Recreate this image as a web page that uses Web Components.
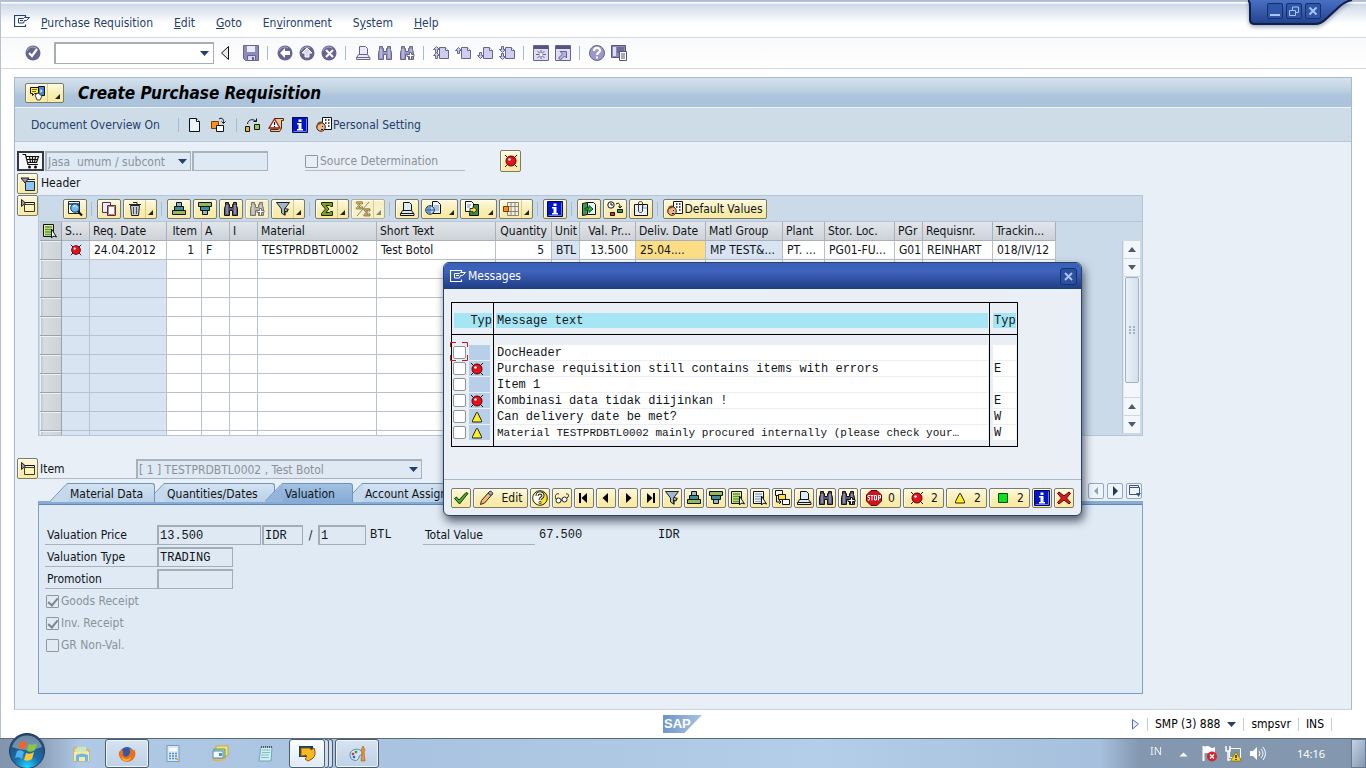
<!DOCTYPE html>
<html lang="en">
<head>
<meta charset="utf-8">
<title>Create Purchase Requisition</title>
<style>
html,body{margin:0;height:100%}
body{font:12px/16px "DejaVu Sans Condensed","DejaVu Sans",sans-serif;color:#101418;background:#fff;overflow:hidden}
</style>
</head>
<body>
<sap-desktop></sap-desktop>
<script>
const define = (name, css, html) => customElements.define(name, class extends HTMLElement {
  constructor() { super(); this.attachShadow({ mode: 'open' }); }
  connectedCallback() {
    const body = typeof html === 'function' ? html(this) : html;
    this.shadowRoot.innerHTML = `<style>*{box-sizing:border-box}button,input,select{font:inherit;color:inherit;margin:0}button{cursor:pointer}${css}</style>${body}`;
  }
});

/* ---------- icons (16 x 16) ---------- */
const P = '#66658f', L = '#cfcdf0';
const printer = (f, s) => `<path d="M4.500 9.500V1.500h6l2 2v6" fill="${f}" stroke="${s}"/><path d="M3.500 9.500h9l2.500 3.500v1.500H1.500V13z" fill="${f}" stroke="${s}"/><path d="M1.500 12.500H15" stroke="${s}"/>`;
const bino = (f, s) => `<path d="M2.500 1.500h3v2h1v3h3v-3h1v-2h3v3l1 3v7h-5v-5h-3v5h-5v-7l1-3z" fill="${f}" stroke="${s}"/><path d="M4 4v9M12 4v9" stroke="#fff" stroke-opacity=".6"/>`;
const plus = (f, s) => `<path d="M10.500 7.500h2v2h2.500v2h-2.500v3h-2v-3H8v-2h2.500z" fill="${f}" stroke="${s}"/>`;
const page = (arrow) => `<path d="M6.500 2.500h6l3 3v8h-9z" fill="${L}" stroke="${P}"/><path d="M12.500 2.500v3h3" stroke="${P}" fill="#fff"/>${arrow}`;
const up = y => `<path d="M3.500 ${y}l3 3h-2v3h-2v-3h-2z" fill="${L}" stroke="${P}"/>`;
const dn = y => `<path d="M3.500 ${y}l3-3h-2v-3h-2v3h-2z" fill="${L}" stroke="${P}"/>`;
const disc = g => `<circle cx="8" cy="8" r="7.500" fill="${P}"/><path d="M2 6a6 6 0 0 1 9-3" stroke="#aeadd0" fill="none"/>${g}`;
const bug = `<path d="M2 2l12 12M14 2L2 14" stroke="#111"/><circle cx="8" cy="8" r="5" fill="#e8101a" stroke="#5c0000"/><circle cx="6.500" cy="6.500" r="1.300" fill="#fff"/>`;
const listPick = (f, c) => `<path d="M1.500 1.500h10v12h-10z" fill="${f}" stroke="#111"/><path d="M3 4h7M3 6.500h7M3 9h7M3 11.500h7" stroke="${c}" stroke-width="1.500"/><path d="M9.500 6v9l2-2 3 1z" fill="#fff" stroke="#111"/>`;
const folder = '<path d="M4.500 6.500h10v7h-10z" fill="#fdf5bd" stroke="#3a3a2a"/><path d="M4 4.500h10.500v2" stroke="#111" fill="none"/>';
const ICONS = {
  window: '<path d="M11.500 4.500v-2h-11v11h11v-2" fill="none" stroke="currentColor" stroke-width="1.200"/><path d="M4.500 5.500h5l1-1h5l-3 3h-2l-1 2.500h-5zM6 7.500h3" fill="none" stroke="currentColor"/>',
  ok: disc('<path d="M4 8l3 3 5-7" fill="none" stroke="#fff" stroke-width="2.200"/>'),
  save: `<path d="M.5.500h15v15h-13l-2-2z" fill="#8d8bbb" stroke="${P}"/><path d="M4 1h8v6H4z" fill="#eceaff"/><path d="M4.500 10.500h8v5h-8z" fill="#d8d6f4" stroke="${P}"/><path d="M9 12h2v3H9z" fill="${P}"/>`,
  back: disc('<path d="M3 8l5-5v3h5v4H8v3z" fill="#fff"/>'),
  exit: disc('<path d="M8 3l5 5h-3v4H6V8H3z" fill="#d8d6f4" stroke="#fff"/>'),
  cancel: disc('<path d="M5 5l7 7M12 5l-7 7" stroke="#fff" stroke-width="2"/>'),
  sprint: printer('#eceaff', P), sfind: bino('#9997c8', P), sfindn: bino('#9997c8', P) + plus('#fff', P),
  first: page(up(1.5) + up(7.5)), prev: page(up(2.5)), next: page(dn(13.5)), last: page(dn(7.5) + dn(14.5)),
  session: `<path d="M.5.500h15v15H.5z" fill="#dddcf2" stroke="${P}"/><path d="M1 1h14v3H1z" fill="#55547c"/><path d="M8 5v9M3 9.500h10M4.500 6l7 7M11.500 6l-7 7" stroke="${P}"/><circle cx="8" cy="9.500" r="1.500" fill="#fff"/>`,
  shortcut: `<path d="M.5.500h15v15H.5z" fill="#dddcf2" stroke="${P}"/><path d="M1 1h14v3H1z" fill="#55547c"/><path d="M5 6.500h6.500V13L9.500 11l-4 4-2-2 4-4z" fill="#b5b3de" stroke="${P}"/>`,
  help: `<circle cx="8" cy="8" r="7.500" fill="#9b99cc" stroke="${P}"/><path d="M5 6c0-4 6-4 6-.5C11 8 8 7.500 8 10" fill="none" stroke="#fff" stroke-width="2.200"/><path d="M7 11.500h2v2H7z" fill="#fff"/>`,
  layout: `<path d="M.5.500h14v12H.5z" fill="#8d8bbb" stroke="#55547c"/><path d="M2 2h3v9H2z" fill="#dddcf2"/><path d="M6 2h7v6H6z" fill="#6e6c9c"/><path d="M8.500 6.500h7v9h-7z" fill="#fff" stroke="#55547c"/><path d="M10 9h4M10 11h4M10 13h4" stroke="#55547c"/>`,
  services: '<path d="M1.500 2.500h8v6h-4l-2 2v-2h-2z" fill="#ffee3a" stroke="#111"/><path d="M3 4.500h5M3 6.500h4" stroke="#7a6b00"/><path d="M9.500 1.500h6v9h-6z" fill="#3e86cf" stroke="#111"/><path d="M11.500 4v4l2-2z" fill="#fff"/><path d="M6 10l3-2 4 3-2 4H8z" fill="#fff" stroke="#444"/>',
  doc: '<path d="M3.500 1.500h7l3 3v10h-10z" fill="#eaf4fb" stroke="#111"/><path d="M10.500 1.500v3h3" fill="#fff" stroke="#111"/>',
  other: '<path d="M1.500 4.500h7v7h-7z" fill="#f5931e" stroke="#7a3c00"/><path d="M6.500 8.500h7v6h-7z" fill="#fff" stroke="#111"/><path d="M9 2c3-2 5 0 4.500 4M11.500 4.500l2 2 2-2" fill="none" stroke="#111"/>',
  hold: '<path d="M1.500 9.500h4v5h-4z" fill="#f5b01e" stroke="#111"/><path d="M10.500 7.500h5v5h-5z" fill="#9acb4a" stroke="#111"/><path d="M3.500 7C4 3 8 1 12.500 4.500M12.500 1.500v3h-3" fill="none" stroke="#111"/>',
  check: '<path d="M6.500 1.500h9v2h-2v8l-2 3h-9v-2h8" fill="#e5c98a" stroke="#4a2a12"/><path d="M6.500 2l5.500 9H1z" fill="#fff" stroke="#a01515" stroke-width="1.300"/><path d="M6.500 5v3M6.500 9v1.300" stroke="#111" stroke-width="1.200"/>',
  info: '<path d="M.500.500h15v15H.500z" fill="#0014c8" stroke="#00085a"/><path d="M1.500 14.500h13v-13" stroke="#6a7cf0" fill="none"/><path d="M6.500 2.500h3v2.500h-3zM5 6h4.500v6H11v1.500H5V12h1.500V7.500H5z" fill="#fff"/>',
  person: '<path d="M6.500.500h9v12h-9z" fill="#fff" stroke="#111"/><path d="M9 3h1.500M12 3h1.500M9 6h1.500M12 6h1.500M12 9h1.500" stroke="#111" stroke-width="1.500"/><circle cx="5" cy="10" r="4.300" fill="#e9b98a" stroke="#3a2010"/><path d="M1 8c0-4 5-4 6-3l-2 2-3 1v3z" fill="#7a4a20"/><path d="M6 9.500h1M5 12.500h2" stroke="#111"/>',
  cart: '<path d="M0 1.500h3l2.500 10h10M3.500 3.500H16l-2 6H5M4.500 6.500h10M7 3.500l1 6M10 3.500v6M13 3.500l-1 6" fill="none" stroke="#111" stroke-width="1.200"/><circle cx="7" cy="14" r="1.500" fill="#111"/><circle cx="13" cy="14" r="1.500" fill="#111"/>',
  open: '<path d="M5.500 5.500h9v9h-9z" fill="#8cc6f5" stroke="#1c2c3c"/><path d="M4 3.500h11" stroke="#1c2c3c"/><path d="M1 2h8L5 7z" fill="#a58bb5" stroke="#222"/>',
  close: folder + '<path d="M1.500 1.500l4 3.500-4 3.500z" fill="#a58bb5" stroke="#222"/>',
  detail: '<path d="M1.500.500h11v12h-11z" fill="#fff" stroke="#222"/><path d="M2 2h10v2H2z" fill="#2a6fbf"/><circle cx="8" cy="7" r="4.300" fill="#69b9f2" stroke="#15304f"/><path d="M6 6l2-1.500 2 2" stroke="#fff" fill="none"/><path d="M11 10.500l4 4" stroke="#111" stroke-width="2.200"/>',
  copy: '<path d="M1.500 1.500h8v10h-8z" fill="#e9eef8" stroke="#55304a"/><path d="M6.500 4.500h8v10h-8z" fill="#fff" stroke="#55304a"/><path d="M7.500 5.500h6v8h-6z" fill="none" stroke="#c57a7a"/>',
  trash: '<path d="M3.500 4.500h9l-1 10h-7z" fill="#c3cad3" stroke="#222"/><path d="M2 3.500h12M6 1.500h4v2" stroke="#222" fill="none"/><path d="M6.500 6v7M9.500 6v7" stroke="#4a5058"/>',
  asc: '<path d="M5.500 1.500h5v4h-5z" fill="#8db9d8" stroke="#111"/><path d="M3.500 5.500h9v4h-9z" fill="#3f8d98" stroke="#111"/><path d="M1.500 9.500h13v4h-13z" fill="#93b95a" stroke="#111"/>',
  desc: '<path d="M1.500 1.500h13v4h-13z" fill="#93b95a" stroke="#111"/><path d="M3.500 5.500h9v4h-9z" fill="#3f8d98" stroke="#111"/><path d="M5.500 9.500h5v4h-5z" fill="#8db9d8" stroke="#111"/>',
  find: bino('#55557c', '#111'), findn: bino('#55557c', '#111') + plus('#fff', '#111'), findoff: bino('#b5b3a8', '#77756a') + plus('#fff', '#77756a'),
  filter: '<path d="M1.500 1.500h13L9.500 8v6l-3-2V8z" fill="#9fb7cf" stroke="#222"/><path d="M10 7.500l3 1-1 2-2 0v4" fill="none" stroke="#222" stroke-width="1.300"/>',
  sum: '<path d="M2.500 1.500h11v4h-2l-1-1H7l3 3.500-3 3.500h3.500l1-1h2v4h-11v-2L6.500 8l-4-4.500z" fill="#7fa01e" stroke="#1f2a05"/>',
  subtotal: '<g transform="scale(.55)"><path d="M2.500 1.500h11v4h-2l-1-1H7l3 3.500-3 3.500h3.500l1-1h2v4h-11v-2L6.500 8l-4-4.500z" fill="#d8c860" stroke="#77714a" stroke-width="1.500"/></g><g transform="translate(7.500 7) scale(.55)"><path d="M2.500 1.500h11v4h-2l-1-1H7l3 3.500-3 3.500h3.500l1-1h2v4h-11v-2L6.500 8l-4-4.500z" fill="#e0a860" stroke="#77714a" stroke-width="1.500"/></g><path d="M14 1L2 15" stroke="#8a8a7a"/>',
  print: printer('#dcebf8', '#111'),
  views: '<path d="M7.500.500h5l3 3v9h-8z" fill="#eaf4fb" stroke="#111"/><path d="M9 5h5M9 7h5M9 9h5" stroke="#6a8fb5"/><circle cx="5" cy="9" r="4.300" fill="#bcd9f3" stroke="#15304f"/><path d="M5 5v8M1 9h8M3 6v6" stroke="#2a5f9f"/>',
  export: '<path d="M8.500 3.500h6v11h-9v-3" fill="#3c8a4a" stroke="#111"/><path d="M1.500.500h6l2 2v8h-8z" fill="#fff" stroke="#111"/><path d="M3 4h4M3 6h3" stroke="#6a8fb5"/><path d="M6 7.500h3V5.500L13 9l-4 3.500v-2H6z" fill="#ffe51e" stroke="#333"/>',
  gridv: '<path d="M4.500 1.500h11v13h-11zM8 1.500v13M12 1.500v13M4.500 5.500h11M4.500 10.500h11" fill="#f4f0e0" stroke="#8a8578"/><path d="M.500 5.500h5v5h-5z" fill="#f0931e" stroke="#7a3c00"/>',
  tbook: '<path d="M1.500 2.500l5-1v12l-5 1z" fill="#3c9a4a" stroke="#111"/><path d="M6.500 1.500h6l2 2v10h-8z" fill="#eaf4fb" stroke="#111"/><path d="M4 7h4V4.500l4 3.500-4 3.500V9H4z" fill="#39b54a" stroke="#0a4a15"/>',
  sched: '<circle cx="4" cy="4" r="3.200" fill="#fff" stroke="#111"/><path d="M4 2v2h2M9 3c3-2 4 0 4 4M11.500 5l1.500 2 2-2" stroke="#111" fill="none"/><path d="M3.500 11.500h4v3h-4z" fill="#e03020" stroke="#111"/><path d="M10.500 8.500h5v3h-5z" fill="#38a030" stroke="#111"/>',
  attach: '<path d="M1.500 3.500h13v11h-13z" fill="#eaf0fa" stroke="#111"/><path d="M10 4v3h4" fill="none" stroke="#8ab"/><path d="M5.500 10V2c0-2 4-2 4 0v8c0 2-4 2-4 0" fill="none" stroke="#333"/>',
  selall: listPick('#dfe8a8', '#5a9a1e'), seloff: listPick('#fff', '#8aaacb'),
  bug,
  tick: '<path d="M1.500 8.500l2-1.500 2.500 3L13 2.500l2 1L6.500 14z" fill="#4fa82a" stroke="#143a08"/>',
  pencil: '<path d="M2.500 10.500l8-9 3 2.500-8 9-4 1.500z" fill="#f5b878" stroke="#3a2410"/><path d="M10.500 1.500c1-1 4 1 3 2.500l-1.500 1.500-3-2.500z" fill="#9aa5c8" stroke="#333"/>',
  qhelp: '<circle cx="8" cy="8" r="7.300" fill="#ffe22a" stroke="#222"/><path d="M8 1.500a6.500 6.500 0 0 0 0 13" fill="#fff"/><path d="M5 6c0-4 6-4 6-.5C11 8 8 7.500 8 10" fill="none" stroke="#111" stroke-width="3"/><path d="M5 6c0-4 6-4 6-.5C11 8 8 7.500 8 10" fill="none" stroke="#fff" stroke-width="1.200"/><path d="M7 11.500h2v2H7z" fill="#fff" stroke="#111" stroke-width=".6"/>',
  glasses: '<circle cx="4.500" cy="10.500" r="2.500" fill="#fff" stroke="#222"/><circle cx="10.500" cy="9.500" r="2.500" fill="#fff" stroke="#222"/><path d="M2 9C0 5 3 3 5 4M7 10h1M13 8c3-2 1-5-1-4" fill="none" stroke="#222"/>',
  pfirst: '<path d="M3 3h2v10H3zM11 3v10L5.500 8z" fill="#000"/>', pprev: '<path d="M10 3v10L4.500 8z" fill="#000"/>',
  pnext: '<path d="M6 3v10l5.500-5z" fill="#000"/>', plast: '<path d="M11 3h2v10h-2zM5 3v10l5.500-5z" fill="#000"/>',
  tree: '<path d="M1.500.500h7v5h-7z" fill="#fff" stroke="#111"/><path d="M4.500 4.500h7v5h-7z" fill="#ffe22a" stroke="#111"/><path d="M8.500 9.500h7v5h-7z" fill="#fff" stroke="#111"/><path d="M2.500 6v6h4M5 10l2 2-2 2" fill="none" stroke="#111"/>',
  stop: '<path d="M5 .500h6L15.500 5v6L11 15.500H5L.500 11V5z" fill="#cf1420" stroke="#5c0000"/><path d="M4 5.500H2V7.500h1.500V10H1.500M4.500 5.500h3M6 5.500V10.500M8.500 5.500h2v4.500h-2zM12.500 10.500V5.500h2V8h-2" fill="none" stroke="#fff"/>',
  warn: '<path d="M7.500 3.500h1l4 8v1.500H3.500v-1.500z" fill="#ffee1e" stroke="#222"/>',
  green: '<path d="M3.500 3.500h9v9h-9z" fill="#0ee01e" stroke="#064a0a"/>',
  xred: '<path d="M3 2l5 4 5-4 1.500 1.500L10.500 8l4 4.500L13 14l-5-4-5 4-1.500-1.500L5.500 8l-4-4.500z" fill="#d81e1e" stroke="#5c0000"/>',
  left: '<path d="M10 4v8L6 8z" fill="#8aa2bb"/>', right: '<path d="M6 3v10l5-5z" fill="#23395c"/>',
  list: '<path d="M3.500 4.500v-2h9v2M3.500 4.500h10v7h-10z" fill="none" stroke="#3c5674"/><path d="M10 10h5l-2.500 4z" fill="#3c5674"/>'
};
define('sap-icon', ':host{display:block;width:16px;height:16px;flex:none}svg{display:block;width:100%;height:100%}',
  el => `<svg viewBox="0 0 16 16" fill="none" aria-hidden="true">${ICONS[el.getAttribute('name')] || ''}</svg>`);

/* flat toolbar item */
define('tool-item', ':host{display:block}button{display:flex;align-items:center;gap:1px;border:0;background:none;padding:0;height:20px;white-space:nowrap}',
  el => `<button aria-label="${el.getAttribute('label') || ''}"><sap-icon name="${el.getAttribute('icon')}"></sap-icon><slot></slot></button>`);
define('tool-sep', ':host{display:block;width:6px;height:14px;flex:none}i{display:block;width:1px;height:100%;margin-left:2px;background:#a9bccd}', '<i></i>');

/* raised yellow button; "menu" adds the drop-down corner */
define('push-button', `:host{display:block;flex:none;width:var(--w,24px);height:20px}
button{display:flex;align-items:center;justify-content:center;gap:var(--gap,0px);width:100%;height:100%;padding:0 2px;border:1px solid #7d7a68;border-radius:2px;background:linear-gradient(#fdf9df,#f8edb0 60%,#fbeaa0);box-shadow:inset 1px 1px #fffdf0;white-space:nowrap}
button.m{justify-content:flex-start;padding-left:3px}
.a{flex:1;align-self:stretch;margin-left:2px;display:flex;align-items:flex-end;justify-content:flex-end;padding:0 1px 3px 0}
.d .a{border-left:1px solid #d8cc90}
:host([off]) button{border-color:#b3ae94;background:#f6efc8}`,
  el => `<button class="${el.hasAttribute('menu') ? 'm ' : ''}${el.getAttribute('menu') === 'split' ? 'd' : ''}" aria-label="${el.getAttribute('label') || ''}"><sap-icon name="${el.getAttribute('icon')}"></sap-icon><slot></slot>${el.hasAttribute('menu') ? `<span class="a"><svg width="5" height="5"><path d="M5 0v5H0z" fill="${el.hasAttribute('off') ? '#8a8670' : '#222'}"/></svg></span>` : ''}</button>`);

define('menu-bar', `:host{display:flex;align-items:center;height:34px;padding:5px 13px 0;color:#24406c;border-bottom:1px solid #d5d9e0;background:linear-gradient(#cfd9e8,#fff 60%)}
nav{display:flex;gap:21px;margin-left:11px}button{border:0;padding:0;background:none}sap-icon{color:#24406c;margin-bottom:4px}`,
  `<sap-icon name="window"></sap-icon><nav>
  <button><u>P</u>urchase Requisition</button><button><u>E</u>dit</button><button><u>G</u>oto</button><button>En<u>v</u>ironment</button><button>S<u>y</u>stem</button><button><u>H</u>elp</button></nav>`);

define('system-bar', `:host{display:flex;align-items:center;gap:6px;height:31px;padding:0 24px;border-bottom:1px solid #d5d9e0;background:linear-gradient(#f8f9fb,#fff)}
.cmd{display:flex;align-items:center;width:160px;height:22px;margin:0 0 0 7px;border:2px solid #a9adb0;border-right-width:1px;border-bottom-width:1px;background:#fff}
.cmd input{border:0;padding:0 3px;min-width:0;flex:1;height:16px;outline:0;background:none}.cmd button,.tri{border:0;background:none;padding:0;width:18px;height:16px}
.tri{width:10px;margin-right:7px}svg{display:block;margin:auto}`,
  `<tool-item icon="ok" label="Enter"></tool-item>
  <div class="cmd"><input aria-label="Command"><button aria-label="History"><svg width="9" height="5"><path d="M0 0h9L4.500 5z" fill="#24406c"/></svg></button></div>
  <button class="tri" aria-label="Collapse"><svg width="10" height="16"><path d="M8.500 1.500v13L1.500 8z" fill="#e8e8e8" stroke="#111"/></svg></button>
  <tool-item icon="save" label="Save"></tool-item><tool-sep></tool-sep>
  <tool-item icon="back" label="Back"></tool-item><tool-item icon="exit" label="Exit"></tool-item><tool-item icon="cancel" label="Cancel"></tool-item><tool-sep></tool-sep>
  <tool-item icon="sprint" label="Print"></tool-item><tool-item icon="sfind" label="Find"></tool-item><tool-item icon="sfindn" label="Find next"></tool-item><tool-sep></tool-sep>
  <tool-item icon="first" label="First page"></tool-item><tool-item icon="prev" label="Previous page"></tool-item><tool-item icon="next" label="Next page"></tool-item><tool-item icon="last" label="Last page"></tool-item><tool-sep></tool-sep>
  <tool-item icon="session" label="New session"></tool-item><tool-item icon="shortcut" label="Shortcut"></tool-item><tool-sep></tool-sep>
  <tool-item icon="help" label="Help"></tool-item><tool-item icon="layout" label="Layout"></tool-item>`);

define('title-bar', `:host{display:flex;align-items:center;height:30px;padding:0 10px;background:linear-gradient(#d5e2ee,#bdd0df 45%,#adc4dd 60%,#abc2dc);border-bottom:1px solid #eef4fa}
h1{margin:0 0 0 14px;font-size:17px;line-height:20px;font-style:italic;font-weight:bold;color:#000}
push-button{--w:39px}`,
  `<push-button icon="services" menu="split" label="Services"></push-button><h1><slot></slot></h1>`);

define('app-bar', `:host{display:flex;align-items:center;height:34px;padding:0 16px;color:#24406c;background:#cedce8;border-bottom:1px solid #b6c8da}
.t{border:0;padding:0;background:none}tool-item,tool-sep{margin-left:8px}tool-sep+tool-item{margin-left:4px}tool-sep.s{margin-left:16px}`,
  `<button class="t">Document Overview On</button><tool-sep class="s"></tool-sep><tool-item icon="doc" label="New"></tool-item><tool-item icon="other" label="Other requisition"></tool-item><tool-sep></tool-sep>
  <tool-item icon="hold" label="Hold"></tool-item><tool-item icon="check" label="Check"></tool-item><tool-item icon="info" label="Info"></tool-item><tool-item icon="person">Personal Setting</tool-item>`);

/* disabled drop-down */
define('drop-field', `:host{display:grid;flex:none;width:var(--w);height:20px;color:#8a9299;font-family:inherit}
select{grid-area:1/1;appearance:none;width:100%;height:20px;padding:0 20px 0 1px;border:2px solid #a9b2ba;border-right-width:1px;border-bottom-width:1px;border-radius:0;background:#dfe9f3;opacity:1;color:inherit}
svg{grid-area:1/1;align-self:center;justify-self:end;margin-right:4px;pointer-events:none}`,
  el => `<select disabled aria-label="${el.getAttribute('label')}"><option>${el.getAttribute('value')}</option></select><svg width="9" height="5"><path d="M0 0h9L4.500 5z" fill="#24406c"/></svg>`);

define('tick-field', `:host{display:flex}label{display:flex;align-items:center;gap:2px;flex:1;height:20px;color:#8a9299}
input{appearance:none;width:13px;height:13px;border:1px solid #8f989f;border-radius:1px;background:transparent;display:grid}
input:checked::after{content:"";width:4px;height:8px;margin:0 0 0 3px;border:solid #7d868e;border-width:0 2px 2px 0;transform:rotate(40deg)}`,
  el => `<label><input type="checkbox" disabled ${el.hasAttribute('checked') ? 'checked' : ''}><slot></slot></label>`);

define('scroll-bar', `:host{display:flex;flex-direction:column;width:18px;border-left:1px solid #b3c5d8;background:#dce7f1;padding:0 0 0 1px}
button{border:0;border-bottom:1px solid #c9d6e3;padding:0;height:18px;background:#f4f7fa;display:grid;place-items:center;flex:none}
.track{flex:1;background:#f4f7fa;padding-bottom:14px;border-bottom:1px solid #c9d6e3}
.thumb{height:100%;margin:0 1px;border:1px solid #9fb2c6;border-radius:2px;background:linear-gradient(90deg,#e9f0f7,#d3e0ed);display:grid;place-items:center}`,
  (() => { const b = (d, n) => `<button aria-label="${n}"><svg width="8" height="5"><path d="${d}" fill="#4c5c6c"/></svg></button>`; const U = 'M0 5h8L4 0z', D = 'M0 0h8L4 5z';
    return b(U, 'Top') + b(D, 'Down') + '<div class="track"><div class="thumb"><svg width="7" height="9"><path d="M0 1h2M4 1h2M0 4h2M4 4h2M0 7h2M4 7h2" stroke="#9fb2c6" stroke-width="2"/></svg></div></div>' + b(U, 'Up') + b(D, 'Bottom'); })());

define('item-grid', `:host{display:block;flex:1;min-width:0;border:1px solid #b3c5d8;background:#cbdae8}
.bar{display:flex;align-items:center;gap:2px;height:26px;padding-left:24px;border-bottom:1px solid #b3c5d8}
.view{display:flex;height:213px;padding:0 2px 0 1px;overflow:hidden}
.tb{flex:1;min-width:0;overflow:hidden}
table{border-collapse:separate;border-spacing:0;table-layout:fixed;width:1016px}
th,td{height:19px;line-height:16px;padding:0 3px;font-weight:normal;text-align:left;white-space:nowrap;overflow:hidden;text-overflow:clip;border-right:1px solid #b9c2cc;border-bottom:1px solid #b9c2cc}
th{background:linear-gradient(#e2e6ea,#cdd2d8);border-color:#a9b0b8}
td{background:#fff;padding:0 4px 1px}
tr>:first-child{padding:0 2px;background:#c6ccd3;border-color:#9aa4ae}
tr td:first-child{background:linear-gradient(90deg,#b8bec6,#d9dde2 20%,#cdd2d8);box-shadow:inset 1px 1px #eef1f4}
.k{background:#d9e4f2}th.r{text-align:right;padding-right:4px}td.r{text-align:right;padding-right:7px}.y{background:#fbdd86}.c sap-icon{margin:auto;width:14px;height:14px}
scroll-bar{margin-top:19px;height:193px}`,
  () => {
    const w = [22, 28, 77, 35, 28, 28, 119, 119, 56, 28, 56, 70, 77, 42, 70, 28, 70, 63];
    const h = ['', 'S...', 'Req. Date', 'Item', 'A', 'I', 'Material', 'Short Text', 'Quantity', 'Unit', 'Val. Pr...', 'Deliv. Date', 'Matl Group', 'Plant', 'Stor. Loc.', 'PGr', 'Requisnr.', 'Trackin...'];
    const d = ['', '<sap-icon name="bug"></sap-icon>', '24.04.2012', '1', 'F', '', 'TESTPRDBTL0002', 'Test Botol', '5', 'BTL', '13.500', '25.04....', 'MP TEST&amp;...', 'PT. ...', 'PG01-FU...', 'G01', 'REINHART', '018/IV/12'];
    const cls = (i, row) => i === 1 ? 'k c' : [9, 12].includes(i) || (i === 2 && row) ? 'k' : [3, 8, 10].includes(i) ? 'r' : i === 11 && !row ? 'y' : '';
    const b = (i, l, x = '') => `<push-button icon="${i}" label="${l}" ${x}></push-button>`, s = '<tool-sep></tool-sep>';
    const W = n => `style="--w:${n}px"`;
    return `<div class="bar">${b('detail', 'Details')}${s}${b('copy', 'Copy')}${b('trash', 'Delete', 'menu="split" ' + W(34))}${s}${b('asc', 'Sort ascending')}${b('desc', 'Sort descending')}${b('find', 'Find')}${b('findoff', 'Find next', 'off')}${b('filter', 'Filter', 'menu="split" ' + W(34))}${s}${b('sum', 'Total', 'menu="split" ' + W(34))}${b('subtotal', 'Subtotals', 'off menu="split" ' + W(34))}${s}${b('print', 'Print')}${b('views', 'Views', 'menu ' + W(37))}${b('export', 'Export', 'menu ' + W(37))}${b('gridv', 'Layout', 'menu="split" ' + W(34))}${s}${b('info', 'Info')}${s}${b('tbook', 'Account assignment')}${b('sched', 'Schedule')}${b('attach', 'Attachments')}${s}<push-button icon="person" style="--w:104px;--gap:1px">Default Values</push-button></div>
    <div class="view"><div class="tb"><table><colgroup>${w.map(x => `<col style="width:${x}px">`).join('')}</colgroup>
    <thead><tr>${h.map((t, i) => `<th class="${[3, 8, 10].includes(i) ? 'r' : ''}">${i ? t : '<sap-icon name="selall"></sap-icon>'}</th>`).join('')}</tr></thead>
    <tbody><tr>${d.map((t, i) => `<td class="${cls(i, 0)}">${t}</td>`).join('')}</tr>${Array.from({ length: 10 }, () => `<tr>${d.map((t, i) => `<td class="${i === 9 || i === 12 ? '' : cls(i, 1)}"></td>`).join('')}</tr>`).join('')}</tbody></table></div><scroll-bar></scroll-bar></div>`;
  });

define('tab-item', `:host{display:block;margin-left:-8px;position:relative}
button{display:flex;border:0;padding:0;background:none;height:19px}
.b{display:block;height:19px;line-height:20px;padding:0 var(--pr,11px) 0 2px;border-top:1px solid #6d94bd;border-right:1px solid #6d94bd;border-radius:0 3px 0 0;background:linear-gradient(#d3e3f2,#b9d0e7);white-space:nowrap}
:host([active]){z-index:2;margin-left:-10px}:host([active]) .b{background:linear-gradient(#a3c1e2,#84aad6)}
:host([first]){z-index:1;margin-left:12px}`,
  el => `<button role="tab"><svg width="18" height="19"><path d="M0 19L18 .500V19z" fill="${el.hasAttribute('active') ? '#93b5dc' : '#c6d9ec'}"/><path d="M0 18.500L16 1.500q1-1 2-1" fill="none" stroke="#6d94bd"/></svg><span class="b"><slot></slot></span></button>`);

define('item-detail', `:host{display:block}
.strip{display:flex;align-items:flex-start;height:18px}
.nav{display:flex;gap:3px;margin-left:auto;padding-right:1px}.nav button{width:16px;height:16px;padding:0;border:1px solid #8ea9c6;border-radius:2px;background:#eff4f9}.nav sap-icon{margin:-1px}
.pane{min-height:193px;padding:21px 6px 0;border:1px solid #7da0c4;border-top:3px solid #86abd4;box-shadow:inset 0 1px #5f88b4;background:#dfeaf4}
.row{display:flex;align-items:center;height:20px;margin-bottom:2px}
label,.l{width:112px;height:20px;line-height:21px;padding-left:2px;border-bottom:1px solid #a9b2ba;flex:none}
input{height:20px;padding:0 1px;border:2px solid #a3adb5;border-right-width:1px;border-bottom-width:1px;background:#dfe9f3;border-radius:0}
input,.m{font-family:"Liberation Mono",monospace}
.p{width:104px}.q{width:41px;margin-left:1px}.s{width:15px;text-align:center}.u{width:48px}.v{width:76px}.m{width:57px;padding-left:4px}.w{width:119px}
tick-field{margin:0 0 2px 1px}`,
  `<div class="strip"><tab-item first>Material Data</tab-item><tab-item style="--pr:16px">Quantities/Dates</tab-item><tab-item active style="--pr:17px">Valuation</tab-item><tab-item>Account Assignment</tab-item>
  <div class="nav"><button aria-label="Previous tab"><sap-icon name="left"></sap-icon></button><button aria-label="Next tab"><sap-icon name="right"></sap-icon></button><button aria-label="Tab list"><sap-icon name="list"></sap-icon></button></div></div>
  <div class="pane">
  <div class="row"><label for="vp">Valuation Price</label><input id="vp" class="p" value="13.500" readonly><input class="q" value="IDR" readonly aria-label="Currency"><span class="s">/</span><input class="u" value="1" readonly aria-label="Per"><span class="m">BTL</span><span class="l">Total Value</span><span class="m w">67.500</span><span class="m">IDR</span></div>
  <div class="row"><label for="vt">Valuation Type</label><input id="vt" class="v" value="TRADING" readonly></div>
  <div class="row"><label for="pr">Promotion</label><input id="pr" class="v" readonly></div>
  <tick-field checked>Goods Receipt</tick-field><tick-field checked>Inv. Receipt</tick-field><tick-field>GR Non-Val.</tick-field></div>`);

define('requisition-form', `:host{display:block;flex:1;padding:8px 208px 14px 2px;background:#e9eff6}
.row{display:flex}.head{height:22px;align-items:center;margin-bottom:1px}
.cart{width:27px;height:20px;border:2px solid #333a44;background:#f4f6f8;padding:0 2px;margin-right:1px}
.in{width:76px;height:20px;border:2px solid #a9b2ba;border-right-width:1px;border-bottom-width:1px;background:#dfe9f3;margin-left:1px}
.src{width:160px;margin:0 35px 0 37px;border-bottom:1px solid #b3bac2;height:20px}
.sq{--w:21px;height:21px}.head .sq{height:22px}.lab{line-height:21px;padding-left:3px}
.two{height:21px;margin-bottom:1px}.item{height:21px;margin:22px 0 4px}.item .lab{width:98px;padding-left:2px;height:21px;line-height:23px;border-bottom:1px solid #b3bac2}
.item drop-field{margin-top:1px}`,
  `<div class="row head"><sap-icon class="cart" name="cart"></sap-icon><drop-field label="Document type" value="Jasa&nbsp; umum / subcont" style="--w:146px"></drop-field><input class="in" disabled aria-label="Number"><tick-field class="src">Source Determination</tick-field><push-button class="sq" icon="bug" label="Messages"></push-button></div>
  <div class="row two"><push-button class="sq" icon="open" label="Expand header"></push-button><span class="lab">Header</span></div>
  <div class="row"><push-button class="sq" icon="close" label="Collapse items"></push-button><item-grid></item-grid></div>
  <div class="row item"><push-button class="sq" icon="close" label="Collapse item"></push-button><span class="lab">Item</span><drop-field label="Item" value="[ 1 ] TESTPRDBTL0002 , Test Botol" style="--w:286px"></drop-field></div>
  <item-detail style="margin-left:21px"></item-detail>`);

define('message-dialog', `:host{display:block;position:absolute;left:443px;top:262px;width:639px;z-index:5}
section{border:1px solid #2a4468;border-radius:6px;background:#e9eff5;box-shadow:2px 5px 10px rgba(30,40,60,.75);overflow:hidden}
header{display:flex;align-items:center;height:26px;padding:0 4px 0 6px;color:#fff;background:linear-gradient(#3a5fb8,#3f64bd 30%,#1f3c84)}
h2{flex:1;margin:0 0 0 2px;font-size:12px;font-weight:normal}
header button{width:17px;height:17px;padding:0;border:1px solid #16306e;border-radius:3px;background:#2c4f9f;display:grid;place-items:center}
.body{padding:13px 7px 0;height:190px}
table{border-collapse:separate;border-spacing:0;table-layout:fixed;width:567px;font-family:"Liberation Mono",monospace;border:1px solid #000}
th,td{padding:0;font-weight:normal;text-align:left;line-height:16px;white-space:nowrap}
th{height:32px;padding-top:10px;vertical-align:top;border-bottom:1px solid #000}th div{background:#a6e6f4;height:15px;margin:0 1px 0 2px;padding-left:1px}
.n div{text-align:right;padding-right:0}
.t,.e{border-left:1px solid #000}
td{height:16px;vertical-align:top}td div{background:#fff;height:15px;margin:0 1px 0 2px;padding-left:1px}
.i div{background:#b8cfe9;margin:0 3px 0 0;padding:0}
.e div{margin:0 1px 0 3px;padding-left:1px}
.long{font-size:11px}
.f td{height:10px}.z td{height:5px}
input{appearance:none;display:block;width:13px;height:13px;margin:1px 1px 0;border:1px solid #8d949b;border-radius:2px;background:#fff}
.foc{position:relative}.foc svg{position:absolute;left:-2px;top:-3px}
footer{display:flex;gap:2px;height:36px;padding:8px 7px 0;border-top:1px solid #a9b9c9}
push-button{--w:20px}.n2{--w:41px;--gap:6px}`,
  () => {
    const rows = [['', 'DocHeader', ''], ['bug', 'Purchase requisition still contains items with errors', 'E'], ['', 'Item 1', ''], ['bug', 'Kombinasi data tidak diijinkan !', 'E'], ['warn', 'Can delivery date be met?', 'W'], ['warn', 'Material TESTPRDBTL0002 mainly procured internally (please check your…', 'W']];
    const b = (i, l) => `<push-button icon="${i}" label="${l}"></push-button>`;
    return `<section role="dialog" aria-label="Messages"><header><sap-icon name="window"></sap-icon><h2>Messages</h2><button aria-label="Close"><svg width="9" height="9"><path d="M1 1l7 7M8 1L1 8" stroke="#a9c4f5" stroke-width="2"/></svg></button></header>
    <div class="body"><table><colgroup><col style="width:17px"><col style="width:24px"><col style="width:496px"><col style="width:28px"></colgroup><thead><tr><th colspan="2" class="n"><div>Typ</div></th><th class="t"><div>Message text</div></th><th class="e"><div>Typ</div></th></tr></thead>
    <tbody><tr class="f"><td colspan="2"></td><td class="t"></td><td class="e"></td></tr>${rows.map((r, n) => `<tr><td class="${n ? '' : 'foc'}"><input type="checkbox" aria-label="${r[1]}">${n ? '' : '<svg width="18" height="19"><path d="M.5 5V.500H6M12 .500h5.500V5M17.500 13v5.500H12M6 18.500H.5V13" fill="none" stroke="#c01818"/></svg>'}</td><td class="i"><div>${r[0] ? `<sap-icon name="${r[0]}"></sap-icon>` : ''}</div></td><td class="t"><div${r[1].length > 60 ? ' class="long"' : ''}>${r[1]}</div></td><td class="e"><div>${r[2]}</div></td></tr>`).join('')}<tr class="z"><td colspan="2"></td><td class="t"></td><td class="e"></td></tr></tbody></table></div>
    <footer>${b('tick', 'Continue')}<push-button icon="pencil" style="--w:55px;--gap:7px">Edit</push-button>${b('qhelp', 'Help')}${b('glasses', 'Display')}${b('pfirst', 'First')}${b('pprev', 'Previous')}${b('pnext', 'Next')}${b('plast', 'Last')}${b('filter', 'Filter')}${b('asc', 'Sort ascending')}${b('desc', 'Sort descending')}${b('selall', 'Select all')}${b('seloff', 'Deselect all')}${b('tree', 'Layout')}${b('print', 'Print')}${b('find', 'Find')}${b('findn', 'Find next')}<push-button class="n2" icon="stop">0</push-button><push-button class="n2" icon="bug">2</push-button><push-button class="n2" icon="warn">2</push-button><push-button class="n2" icon="green">2</push-button>${b('info', 'Info')}${b('xred', 'Cancel')}</footer></section>`;
  });

define('window-controls', `:host{display:block;position:absolute;right:0;top:0;width:118px;height:30px}
svg{display:block}.bg{filter:drop-shadow(0 2px 2px rgba(20,40,80,.4))}
div{position:absolute;left:19px;top:3px;display:flex;gap:3px}
button{width:16px;height:16px;padding:0;border:1px solid #16306e;border-radius:2px;background:#2f55a8;display:grid;place-items:center}`,
  `<svg class="bg" width="118" height="30"><defs><linearGradient id="g" x2="0" y2="1"><stop stop-color="#4a70c4"/><stop offset="1" stop-color="#22418c"/></linearGradient></defs><path d="M0 0q2 2 2 6v14q0 4 5 4h60q6 0 11-5L92 6q6-5 12-6z" fill="url(#g)"/><path d="M0 0q2 2 2 6v14q0 4 5 4h60q6 0 11-5L92 6q6-5 12-6" fill="none" stroke="#0d1d4c" stroke-width="2"/></svg>
  <div><button aria-label="Minimize"><svg width="10" height="10"><path d="M0 9h10" stroke="#a9c4f5" stroke-width="2"/></svg></button><button aria-label="Restore"><svg width="10" height="10"><path d="M.5 4.500h6v5h-6zM3.500 4V1h6v5.500H7" fill="none" stroke="#a9c4f5"/></svg></button><button aria-label="Close"><svg width="10" height="10"><path d="M1.500 1.500l7 7M8.500 1.500l-7 7" stroke="#a9c4f5" stroke-width="2"/></svg></button></div>`);

define('status-bar', `:host{display:grid;grid-template-columns:1fr auto 1fr;align-items:center;height:28px;padding:0 34px 0 32px;background:#fff;color:#000}
.r{display:flex;align-items:center;justify-content:flex-end;gap:7px}.r i{width:1px;height:13px;background:#c5ccd4}svg{display:block}
.logo{position:relative;width:39px;height:18px;padding-left:1px;font:bold 13px/18px "Liberation Sans",sans-serif;color:#fff}
.logo::before{content:"";position:absolute;inset:0;z-index:-1;background:linear-gradient(100deg,#6c93c8,#a9c6e6);clip-path:polygon(0 0,100% 0,55% 100%,0 100%)}
.logo{z-index:0}`,
  `<span></span><span class="logo">SAP</span><div class="r"><svg width="9" height="12"><path d="M1.500 1.500v9.500l6-5z" fill="#e3eefa" stroke="#5575a5"/></svg><i></i><span>SMP (3) 888</span><svg width="9" height="5"><path d="M0 0h9L4.500 5z" fill="#24406c"/></svg><i></i><span>smpsvr</span><i></i><span>INS</span><i></i></div>`);

define('task-bar', `:host{display:flex;align-items:center;flex:none;height:30px;padding-left:8px;border-top:1px solid #5c6a7a;color:#fff;font:11px/16px "Noto Sans",sans-serif;background:linear-gradient(90deg,#8294ab,#8c9fb6 40px,#b0c9e5 80px,#a9c3e0 30%,#b4cde8 60%,#a6c0dd 1100px,#8397af 1140px,#8397af)}
button{border:0;padding:0;background:none;height:29px;display:grid;place-items:center;width:44px}
.on{border:1px solid #4b5b70;border-radius:3px;background:linear-gradient(#d6e3f1,#bed1e7);box-shadow:inset 0 0 0 1px #eff6fc}
.hot{background:linear-gradient(#fdfeff,#dfe9f5);width:36px}.orb{width:38px;height:36px;margin-top:-6px}
svg{display:block}.tray{display:flex;align-items:center;margin-left:auto;height:29px}
.sd{width:15px;border:1px solid #66788f;border-radius:0;background:linear-gradient(120deg,#c5d3e2,#8397af)}
.st{width:4px;height:29px;border:1px solid #4b5b70;border-left:0;border-radius:0 3px 3px 0;background:#cfdcea}`,
  `<button class="orb" aria-label="Start"><svg width="38" height="36" viewBox="0 0 38 36"><defs><radialGradient id="o" cx=".5" cy=".95" r=".9"><stop stop-color="#22d5ff"/><stop offset=".4" stop-color="#1a6fae"/><stop offset="1" stop-color="#24486e"/></radialGradient></defs><circle cx="19" cy="18" r="17.500" fill="url(#o)" stroke="#1c3a5c"/><path d="M4 14a15.500 15.500 0 0 1 30 0q-15 6-30 0" fill="#fff" opacity=".35"/><path d="M12 9q4-2 7 1l-2 7q-3-3-7-1z" fill="#f0662a"/><path d="M21 11q4 2 8-1l-2 7q-4 3-8 1z" fill="#8cc63f"/><path d="M9 18q4-2 7 1l-2 7q-3-3-7-1z" fill="#4fb1ee"/><path d="M18 20q4 2 8-1l-2 7q-4 3-8 1z" fill="#fdc82f"/></svg></button>
  <button style="width:59px;padding-left:12px" aria-label="Explorer"><svg width="18" height="16"><path d="M1 2h6l1 2h8v11H1z" fill="#f2dc8c" stroke="#c5a850"/><path d="M4 1h9v5H4z" fill="#cfe8b8"/><path d="M1 6h15v9H1z" fill="#f8e9a5"/><path d="M3 15V9q6-3 12 0v6h-3v-4H6v4z" fill="#6db8e6"/></svg></button>
  <button class="on" aria-label="Firefox"><svg width="18" height="18"><circle cx="9" cy="9" r="7" fill="#2f58a8"/><path d="M11 3a6 6 0 0 1-1 8q-3 2-5-1 1-2-1-6L1 7a8.300 8.300 0 1 0 15-3q0 2-1 2-1-2-4-3z" fill="#e8701c"/><path d="M3 11q4 6 10 1-1 5-6 4-3-1-4-5z" fill="#f8b52c"/></svg></button>
  <button style="width:48px" aria-label="Calculator"><svg width="14" height="17"><path d="M1 .500h12v16H1z" fill="#d8e9f8" stroke="#6f9cc8"/><path d="M3 3h8v3H3z" fill="#fff"/><path d="M3 8.500h8M3 11h8M3 13.500h8" stroke="#5a8cc0" stroke-width="1.500" stroke-dasharray="2 1"/><path d="M10 13h2v2h-2z" fill="#f0a030"/></svg></button>
  <button style="width:46px" aria-label="Sticky notes"><svg width="18" height="17"><path d="M5 1h12v10H5z" fill="#f8e27a" stroke="#c5a850"/><path d="M3 4h11v9H3z" fill="#a9dba0" stroke="#5a9c60"/><path d="M2 6h10v7H2z" fill="#f2f8fd" stroke="#5a8cc0"/><path d="M8 8h3v3H8z" fill="#4a90d0"/><path d="M1 13q6 4 14-1v2q-8 4-14 1z" fill="#f0b040"/></svg></button>
  <button style="width:46px" aria-label="Notepad"><svg width="16" height="17"><path d="M3 2h11l-1 14H1z" fill="#d3eff3" stroke="#6aa9b5"/><path d="M4 5h8M4 7.500h8M3 10h8M3 12.500h8" stroke="#7fbcc8"/><path d="M3 2h11" stroke="#556" stroke-width="2" stroke-dasharray="1 1"/></svg></button>
  <button class="on hot" aria-label="SAP Logon"><svg width="18" height="18"><path d="M1 1h14v11H1z" fill="#173c6c"/><path d="M3 3h9l1 2 3-2q3 7-2 11l-4 2-3-2q3-2 1-4-2 1-5 1z" fill="#f8b820" stroke="#8a5a08"/></svg></button><i class="st"></i><i class="st"></i>
  <button class="on" style="margin-left:2px" aria-label="Paint"><svg width="18" height="17"><path d="M2 10C2 5 8 3 12 5q4 3 1 5-3 1-2 3-2 4-6 2-3-1-3-5z" fill="#cfe3f2" stroke="#5a8cb0"/><circle cx="5" cy="9" r="1.300" fill="#d03030"/><circle cx="8" cy="7" r="1.300" fill="#3a9a3a"/><circle cx="6" cy="12" r="1.300" fill="#3060c0"/><path d="M13 16l1-9-1-2 2-4 2 4-1 2 1 9z" fill="#e8953a" stroke="#a05a18" stroke-width=".6"/></svg></button>
  <div class="tray"><span style="margin-right:17px;margin-bottom:6px;opacity:.85">IN</span><svg width="9" height="5" style="margin-right:13px;margin-top:2px"><path d="M4.500.500L8.500 4.500h-8z" fill="#fff"/></svg>
  <svg width="17" height="17" style="margin-right:7px"><path d="M2.500 1v15" stroke="#fff" stroke-width="2"/><path d="M3 2q4-2 6 0t5 0v6H3z" fill="#fff"/><circle cx="11" cy="11.500" r="5" fill="#d8242a"/><path d="M9 9.500l4 4M13 9.500l-4 4" stroke="#fff" stroke-width="1.500"/></svg>
  <svg width="17" height="17" style="margin-right:7px"><path d="M4.500 3.500h11v9h-11z" fill="#7f93ab" stroke="#fff"/><path d="M1 1v5h4V1M3 6v9h6" fill="none" stroke="#fff" stroke-width="1.500"/><path d="M11 7l5.500 9h-11z" fill="#f8d01c" stroke="#806000" stroke-width=".6"/><path d="M11 10v3M11 14v1" stroke="#111" stroke-width="1.300"/></svg>
  <svg width="17" height="17" style="margin-right:31px"><path d="M1 6h3l4-4v13l-4-4H1z" fill="#fff"/><path d="M10 6q2 2.500 0 5M12 4q4 4.500 0 9M14 2q5 6.500 0 13" fill="none" stroke="#fff"/></svg>
  <span style="width:54px">14:16</span><button class="sd" aria-label="Show desktop"></button></div>`);

define('sap-desktop', `:host{display:flex;flex-direction:column;min-height:100vh;position:relative}
.top{height:4px;background:linear-gradient(#aebdd2 1px,#b8c6d9 2px,#fff 2px,#e6ecf4)}
main{flex:1;display:flex;flex-direction:column;margin:8px 14px 0;border:1px solid #a9b8ca;border-bottom-color:#c9d2dd;background:#e9eff6}
.win{flex:1;display:flex;flex-direction:column;border-left:1px solid #b8c1cc;background:linear-gradient(#eef2f7,#fff 20px)}
.win>main{margin-left:13px}`,
  `<div class="win"><div class="top"></div><menu-bar></menu-bar><system-bar></system-bar>
  <main><title-bar>Create Purchase Requisition</title-bar><app-bar></app-bar><requisition-form></requisition-form></main><status-bar></status-bar></div>
  <task-bar></task-bar><window-controls></window-controls><message-dialog></message-dialog>`);
</script>
</body>
</html>
